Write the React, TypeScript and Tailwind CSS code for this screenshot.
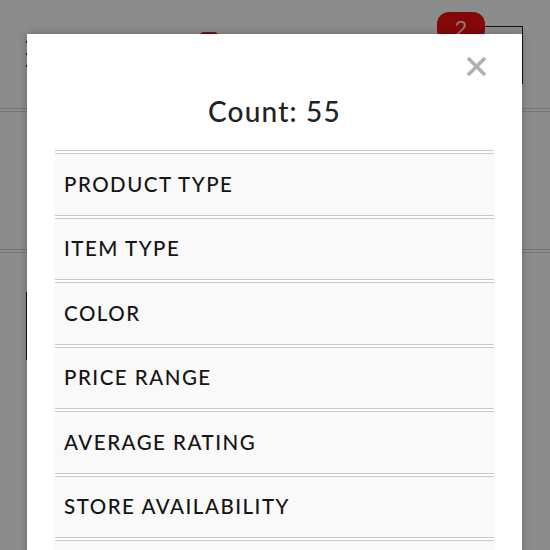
const filters = [
  'PRODUCT TYPE',
  'ITEM TYPE',
  'COLOR',
  'PRICE RANGE',
  'AVERAGE RATING',
  'STORE AVAILABILITY',
  '',
]

function DoubleRule() {
  return (
    <div className="border-t border-[#d6d6d6] pt-[2px]">
      <div className="border-t border-[#d6d6d6]" />
    </div>
  )
}

function BackgroundPage() {
  return (
    <div className="flex flex-col bg-white">
      <header className="relative h-[108px]">
        <div className="absolute left-[26px] top-[41px] flex flex-col gap-[10px]">
          <span className="block h-[2px] w-[24px] bg-[#222]" />
          <span className="block h-[2px] w-[24px] bg-[#222]" />
          <span className="block h-[2px] w-[24px] bg-[#222]" />
        </div>
        <div className="absolute left-[200px] top-[32px] h-[8px] w-[18px] rounded-full bg-[#e01b22]" />
        <div className="absolute left-[462px] top-[26px] h-[58px] w-[61px] border border-[#222]" />
        <div className="absolute left-[437px] top-[12px] flex h-[30px] w-[48px] items-center justify-center rounded-[12px] bg-[#f21010] text-[22px] text-[#ffdede]">
          2
        </div>
      </header>
      <DoubleRule />
      <div className="h-[137px]" />
      <DoubleRule />
      <div className="pl-[26px] pt-[39px]">
        <div className="h-[68px] w-[200px] border-l-2 border-[#222]" />
      </div>
      <div className="h-[200px]" />
    </div>
  )
}

export default function App() {
  return (
    <div
      className="relative h-[550px] w-[550px] overflow-hidden"
      style={{ fontFamily: 'Lato, "Open Sans", sans-serif' }}
    >
      <BackgroundPage />
      <div className="absolute inset-0 bg-black/45" />

      <div className="absolute left-[27px] top-[34px] w-[495px] bg-white px-[28px] pb-10 shadow-[0_0_8px_rgba(0,0,0,0.25)]">
        <button className="absolute right-[35px] top-[22px] text-[#b0b0b0]">
          <svg width="21" height="21" viewBox="0 0 21 21">
            <path d="M2 2L19 19M19 2L2 19" stroke="currentColor" strokeWidth="3.6" />
          </svg>
        </button>

        <h2 className="pt-[60px] text-center text-[28px] font-medium leading-[34px] tracking-[1.2px] text-[#222]">
          Count: 55
        </h2>

        <ul className="mt-[22px] flex flex-col">
          {filters.map((name, i) => (
            <li key={i} className="border-t border-[#c8c8c8] pt-[2px]">
              <div className="flex h-[61.5px] items-center border-t border-[#c8c8c8] bg-[#f9f9f9] pl-[9px] text-[20.5px] font-medium tracking-[1.5px] text-[#151515]">
                {name}
              </div>
            </li>
          ))}
        </ul>
      </div>
    </div>
  )
}
